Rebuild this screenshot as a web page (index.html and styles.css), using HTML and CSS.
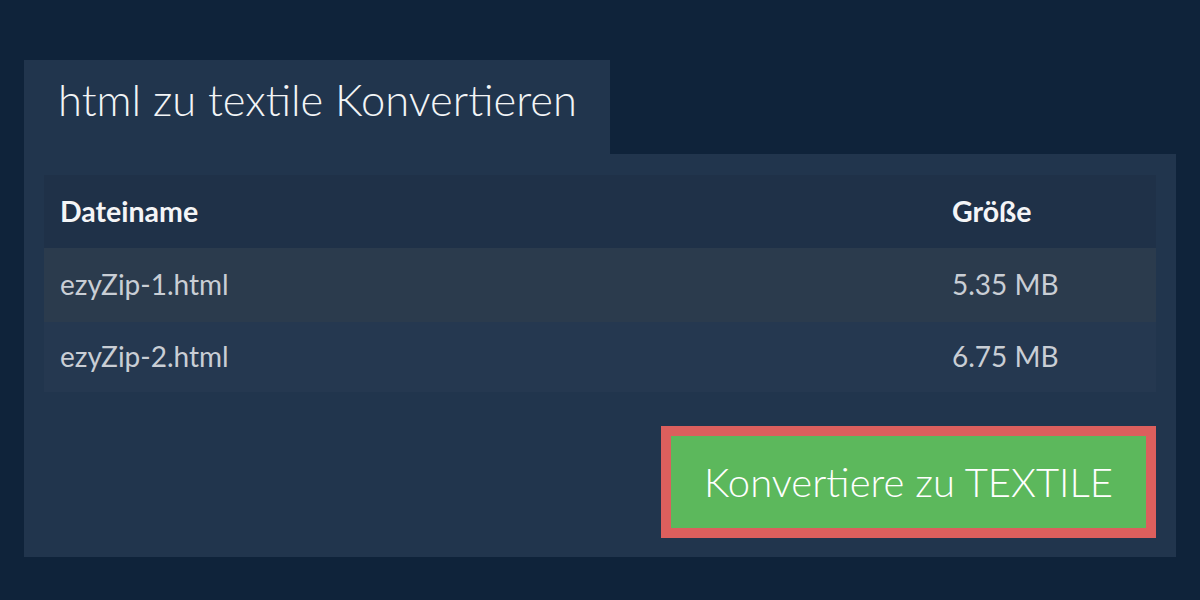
FILE: index.html
```html
<!DOCTYPE html>
<html lang="de">
<head>
<meta charset="utf-8">
<title>html zu textile Konvertieren</title>
<link rel="stylesheet" href="styles.css">
</head>
<body>
<div class="page">
  <div class="tab"><h1 class="title">html zu textile Konvertieren</h1></div>
  <div class="panel">
    <table class="files">
      <thead>
        <tr class="head"><th class="c-name">Dateiname</th><th class="c-size">Größe</th></tr>
      </thead>
      <tbody>
        <tr class="row r1"><td class="c-name">ezyZip-1.html</td><td class="c-size">5.35 MB</td></tr>
        <tr class="row r2"><td class="c-name">ezyZip-2.html</td><td class="c-size">6.75 MB</td></tr>
      </tbody>
    </table>
    <div class="actions">
      <button class="convert">Konvertiere zu TEXTILE</button>
    </div>
  </div>
</div>
</body>
</html>
```

FILE: styles.css
```css
html, body {
  margin: 0;
  padding: 0;
  background: #0f233a;
  font-family: Lato, "Open Sans", sans-serif;
}
.page {
  padding: 60px 24px 43px;
}
.tab {
  width: 586px;
  height: 94px;
  box-sizing: border-box;
  padding: 18px 0 0 34px;
  background: #21354d;
}
.title {
  margin: 0;
  font-size: 43.5px;
  font-weight: 300;
  color: #f2f4f6;
  line-height: 1;
  white-space: nowrap;
}
.panel {
  background: #21354d;
  padding: 21px 20px 19px;
}
.files {
  width: 100%;
  border-collapse: collapse;
  font-size: 28px;
}
.files th, .files td {
  text-align: left;
  padding: 0 0 0 16px;
  line-height: 1.2;
}
.files .c-size { padding-left: 17px; }
.c-name { width: 875px; }
.head {
  height: 73px;
  background: #1f3148;
}
.head th {
  color: #f4f5f7;
  font-weight: 700;
  font-size: 28.5px;
}
.row td {
  color: #c9ced5;
  font-weight: 400;
}
.r1 { height: 74px; background: #2b3b4d; }
.r2 { height: 70px; background: #253850; }
.actions {
  display: flex;
  justify-content: flex-end;
  margin-top: 34px;
}
.convert {
  width: 495px;
  height: 112px;
  border: 10px solid #dc5f5d;
  background: #5cb85c;
  color: #ffffff;
  font-family: Lato, "Open Sans", sans-serif;
  font-size: 40px;
  font-weight: 300;
  padding: 0;
  cursor: pointer;
}
```
